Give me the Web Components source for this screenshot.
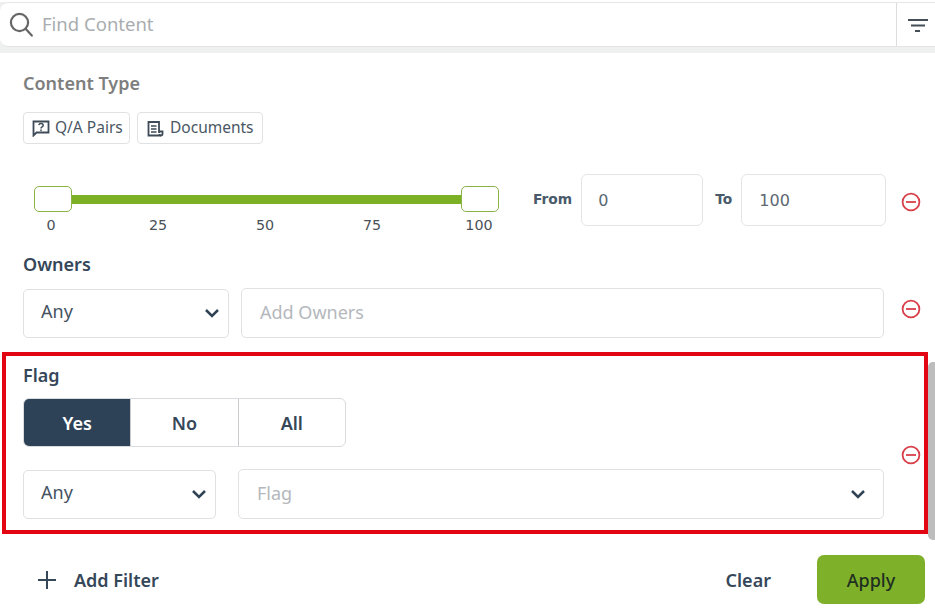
<!DOCTYPE html>
<html>
<head>
<meta charset="utf-8">
<title>Find Content</title>
<style>
  html, body { margin: 0; height: 613px; overflow: hidden; background: #fff; }
  body { font-family: "Noto Sans", "Open Sans", sans-serif; color: #36475a; }
</style>
</head>
<body>
<search-bar placeholder="Find Content"></search-bar>
<filter-panel>
  <field-label muted style="margin-top:18px">Content Type</field-label>
  <div style="display:flex;gap:7px;margin:17px 0 0 21px">
    <type-chip icon="qa" style="width:107px;--pad:8px;--gap:5px">Q/A Pairs</type-chip>
    <type-chip icon="doc" style="width:126px;--pad:9px;--gap:6px">Documents</type-chip>
  </div>
  <range-filter from="0" to="100"></range-filter>
  <field-label style="margin-top:26px">Owners</field-label>
  <filter-row style="margin-top:12px" nudge="8px">
    <select-box value="Any" style="width:206px"></select-box>
    <select-box placeholder="Add Owners" plain style="flex:1;margin-left:12px;height:50px"></select-box>
  </filter-row>
  <flag-filter></flag-filter>
  <panel-footer></panel-footer>
</filter-panel>
<div id="scrollbar" style="position:absolute;left:928px;top:362px;width:7px;height:178px;background:#bdbdbd;border-radius:5px 0 0 5px"></div>

<script>
function define(name, html, init) {
  customElements.define(name, class extends HTMLElement {
    constructor() {
      super();
      this.attachShadow({ mode: 'open' });
    }
    connectedCallback() {
      this.shadowRoot.innerHTML = typeof html === 'function' ? html(this) : html;
      if (init) init(this);
    }
  });
}

const attr = (el, name, dflt) => el.hasAttribute(name) ? el.getAttribute(name) : dflt;

define('search-bar', el => `
  <style>
    :host { display: block; margin-top: 2px; background: #eff0f0; padding-bottom: 6px; }
    .bar { display: flex; align-items: center; box-sizing: border-box; height: 45px; background: #fff;
      border-top: 1px solid #e6e6e6; border-bottom: 1px solid #e4e4e4; border-radius: 8px 0 0 8px; }
    svg.s { margin-left: 9px; flex: none; }
    .text { flex: 1; margin-left: 8px; padding-bottom: 2px; font-size: 18.5px; color: #a9adb0; }
    .filter { box-sizing: border-box; width: 39px; height: 100%; flex: none; padding-left: 10px; border-left: 1px solid #dcdcdc; display: flex; align-items: center; }
  </style>
  <div class="bar">
    <svg class="s" width="25" height="26" viewBox="0 0 25 26" fill="none" stroke="#666" stroke-width="2.2" stroke-linecap="round">
      <circle cx="10.5" cy="10.5" r="8.6"/><path d="M16.8 17l6 6.6"/>
    </svg>
    <div class="text">${el.getAttribute('placeholder')}</div>
    <div class="filter">
      <svg width="22" height="14" viewBox="0 0 22 14" stroke="#454f59" stroke-width="2" fill="none">
        <path d="M1 2h20M4 7.500h14M8 13h5"/>
      </svg>
    </div>
  </div>`);

define('filter-panel', `
  <style>
    :host { display: block; padding-left: 2px; }
  </style>
  <slot></slot>`);

define('field-label', el => `
  <style>
    :host { display: block; margin-left: 21px; font-size: 18px; line-height: 24px; font-weight: 600;
      color: ${el.hasAttribute('muted') ? '#7e7e7e' : '#36475a'}; }
  </style>
  <slot></slot>`);

const ICONS = {
  qa: `<svg width="18" height="17" viewBox="0 0 18 17" fill="none" stroke="#3d4a57" stroke-width="1.8">
    <path d="M1.500 1.500h15v11h-12l-3 3z"/>
    <path d="M6.800 5.200c.3-1.300 1.300-1.600 2.200-1.600 1.200 0 2.200.7 2.200 1.800 0 1.500-2.200 1.500-2.200 3" stroke-width="1.500"/>
    <path d="M9 9.600v1.300" stroke-width="1.500"/>
  </svg>`,
  doc: `<svg width="17" height="16" viewBox="0 0 17 16" fill="none" stroke="#3d4a57" stroke-width="1.800">
    <path d="M12 12V1H1.500v13.500H14"/>
    <path d="M4 5h5.500M4 8h5.500M4 11h5.500" stroke-width="1.500"/>
    <path d="M12 10.500h3.500v2.500a1.500 1.500 0 0 1-3 0"/>
  </svg>`
};

define('type-chip', el => `
  <style>
    :host { display: block; }
    .chip { display: flex; align-items: center; gap: var(--gap); box-sizing: border-box; height: 32px; padding: 0 0 0 var(--pad);
      border: 1px solid #dfe1e3; border-radius: 4px; font-size: 15.500px; color: #4a5764; background: #fff; }
    svg { flex: none; margin-top: 1px; }
    span { padding-bottom: 2px; }
  </style>
  <div class="chip">${ICONS[el.getAttribute('icon')]}<span><slot></slot></span></div>`);

define('remove-button', el => `
  <style>
    :host { display: block; flex: none; width: 20px; height: 20px; margin-bottom: ${attr(el, 'nudge', '0')}; }
    svg { display: block; }
  </style>
  <svg width="20" height="20" viewBox="0 0 20 20" fill="none" stroke="#d8404a" stroke-width="1.800">
    <circle cx="10" cy="10" r="8.400"/><path d="M5 10h10"/>
  </svg>`);

// row of fields with the red remove button on the far right
define('filter-row', el => `
  <style>
    :host { display: flex; align-items: center; margin-left: 21px; margin-right: 14px; }
    .fields { flex: 1; display: flex; align-items: center; min-width: 0; }
    remove-button { margin-left: 17px; }
  </style>
  <div class="fields"><slot></slot></div>
  <remove-button nudge="${attr(el, 'nudge', '0')}"></remove-button>`);

define('select-box', el => {
  const plain = el.hasAttribute('plain');
  const ph = el.getAttribute('placeholder');
  return `
  <style>
    :host { display: block; box-sizing: border-box; height: 49px; }
    .box { display: flex; align-items: center; box-sizing: border-box; height: 100%; padding: 0 var(--chev-pad, 9px) 0 ${ph ? '18px' : '17px'};
      border: 1px solid #dfe1e3; border-radius: 5px; background: #fff; font-size: 18px; }
    .v { flex: 1; color: #45525f; padding-bottom: ${ph ? '3px' : '5px'}; }
    .ph { color: #b4b8bc; }
    svg { flex: none; }
  </style>
  <div class="box">
    <span class="v ${ph ? 'ph' : ''}">${ph || el.getAttribute('value')}</span>
    ${plain ? '' : `<svg width="14" height="9" viewBox="0 0 14 9" fill="none" stroke="#2f4256" stroke-width="2.500"><path d="M1 1l6 6 6-6"/></svg>`}
  </div>`;
});

define('range-filter', el => `
  <style>
    :host { display: flex; margin: 30px 13px 0 32px; height: 52px; font-family: "DejaVu Sans", sans-serif; }
    .slider { position: relative; flex: none; width: 465px; margin-top: 12px; }
    .rail { height: 9px; margin: 9px 0 0; background: #7cb025; }
    .thumb { position: absolute; top: 0; box-sizing: border-box; width: 38px; height: 26px; background: #fff;
      border: 1px solid #8ab348; border-radius: 5px; }
    .ticks { display: flex; justify-content: space-between; margin: 13px 0 0 -3px; font-size: 14.300px; color: #4a5158; }
    .ticks span { width: 40px; text-align: center; }
    .lbl { font-size: 13.800px; font-weight: 700; color: #4a5a6a; line-height: 50px; }
    .num { box-sizing: border-box; height: 52px; border: 1px solid #e2e4e6; border-radius: 6px; padding-left: 17px;
      font-size: 16px; line-height: 51px; color: #5d6873; }
    remove-button { margin: 18px 0 0 15px; }
  </style>
  <div class="slider">
    <div class="rail"></div>
    <div class="thumb" style="left:0"></div>
    <div class="thumb" style="right:0"></div>
    <div class="ticks"><span>0</span><span>25</span><span>50</span><span>75</span><span>100</span></div>
  </div>
  <span class="lbl" style="margin-left:34px">From</span>
  <div class="num" style="width:122px;margin-left:9px;padding-left:16px">${el.getAttribute('from')}</div>
  <span class="lbl" style="margin-left:12px">To</span>
  <div class="num" style="width:145px;margin-left:9px">${el.getAttribute('to')}</div>
  <remove-button></remove-button>`);

define('seg-buttons', `
  <style>
    :host { display: flex; width: 323px; height: 49px; box-sizing: border-box; border: 1px solid #d9dbde; border-radius: 6px; overflow: hidden; }
    span { flex: 1; display: flex; align-items: center; justify-content: center; font-size: 18px; font-weight: 600; color: #36475a; }
    span + span { border-left: 1px solid #c9cbce; }
    .on { background: #2d4257; color: #fff; }
  </style>
  <span class="on">Yes</span><span>No</span><span>All</span>`);

define('flag-filter', `
  <style>
    :host { display: block; box-sizing: border-box; height: 182px; margin: 14px 7px 0 0; border: 4px solid #e20613; padding-top: 7px; }
    .label { margin-left: 17px; font-size: 18px; line-height: 24px; font-weight: 600; color: #36475a; }
    .row { display: flex; align-items: center; margin: 11px 3px 0 17px; }
    .col { flex: 1; min-width: 0; }
    .two { display: flex; align-items: center; margin-top: 22px; }
    remove-button { margin-left: 17px; }
  </style>
  <div class="label">Flag</div>
  <div class="row">
    <div class="col">
      <seg-buttons></seg-buttons>
      <div class="two">
        <select-box value="Any" style="width:193px"></select-box>
        <select-box placeholder="Flag" style="flex:1;margin-left:22px;height:50px;--chev-pad:18px"></select-box>
      </div>
    </div>
    <remove-button nudge="8px"></remove-button>
  </div>`);

define('panel-footer', `
  <style>
    :host { display: flex; align-items: center; margin: 21px 10px 0 36px; height: 49px; font-size: 18px; font-weight: 600; color: #36475a; }
    .add { flex: 1; display: flex; align-items: center; gap: 18px; }
    .clear { margin-right: 46px; }
    .apply { display: flex; align-items: center; justify-content: center; width: 108px; height: 49px; border-radius: 7px;
      background: #7eb02a; color: #1f2f20; font-weight: 500; }
    svg { flex: none; }
  </style>
  <div class="add">
    <svg width="18" height="18" viewBox="0 0 18 18" stroke="#36475a" stroke-width="2" fill="none"><path d="M9 0v18M0 9h18"/></svg>
    <span>Add Filter</span>
  </div>
  <span class="clear">Clear</span>
  <div class="apply">Apply</div>`);
</script>
</body>
</html>
